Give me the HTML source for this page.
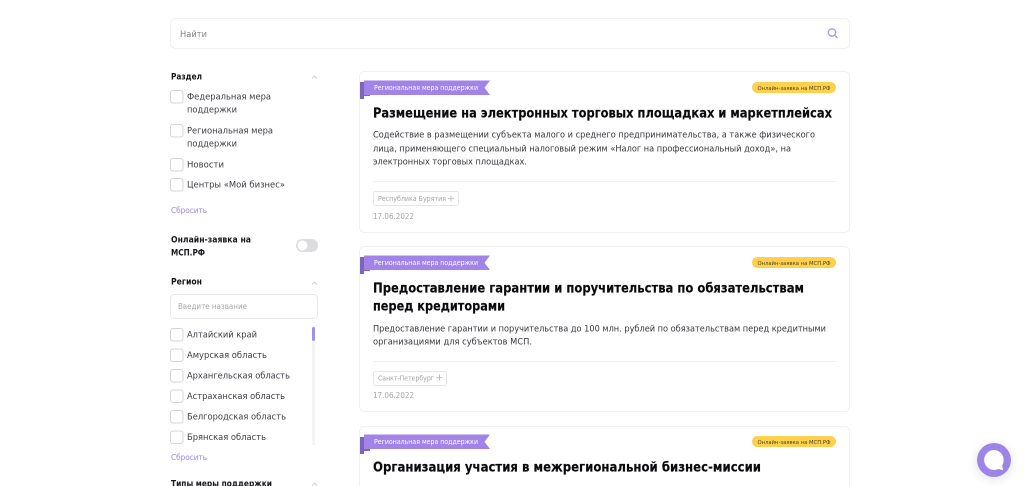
<!DOCTYPE html>
<html lang="ru"><head><meta charset="utf-8"><title>Меры поддержки</title>
<style>
html,body{margin:0;padding:0;background:#fff;width:1024px;height:486px;overflow:hidden}
svg{display:block}
text{font-family:"DejaVu Sans","Liberation Sans",sans-serif}
.t{font-size:8.8px;fill:#3c3c44;transform:translateY(-.5px)}
.h{font-size:8.8px;font-weight:700;fill:#17171c;transform:translateY(-.4px)}
.r{font-size:7.5px;fill:#9b82e2}
.rb{font-size:6.8px;fill:#fff}
.ti{font-size:13.4px;font-weight:700;fill:#0b0b0f;stroke:#0b0b0f;stroke-width:.15px;transform:translateY(-.3px)}
.d{font-size:8.8px;fill:#35353c;transform:translateY(-.4px)}
.p{font-size:5.4px;fill:#4d4320}
.g{font-size:7px;fill:#a3a3a8}
.dt{font-size:8px;fill:#a6a6aa}
.c{fill:#fff;stroke:#d4d4d8;stroke-width:1}
.cd{fill:#fff;stroke:#f0f0f2;stroke-width:1}
.ch{fill:none;stroke:#c4c4c8;stroke-width:.8}
</style></head><body>
<svg width="1024" height="486" viewBox="0 0 1024 486" xmlns="http://www.w3.org/2000/svg">
<defs>
<filter id="sh" x="-50%" y="-50%" width="200%" height="200%"><feDropShadow dx="0" dy="2" stdDeviation="5" flood-color="#000" flood-opacity=".12"/></filter>
</defs>
<rect x="170.500" y="18.500" width="679" height="30" rx="5" class="cd"/>
<text x="180" y="37" fill="#85858a" textLength="27" lengthAdjust="spacingAndGlyphs" style="font-size:9px">Найти</text>
<circle cx="832" cy="32.500" r="3.700" fill="none" stroke="#a797e8" stroke-width="1.300"/><path d="M835 35.500l2.500 2.500" stroke="#a797e8" stroke-width="1.300"/>

<!-- Sidebar -->
<text x="171" y="80" class="h" textLength="31" lengthAdjust="spacingAndGlyphs">Раздел</text>
<path d="M312 78.500l2.500-2.500 2.500 2.500" class="ch"/>
<rect x="170.500" y="90.500" width="12.500" height="12.500" rx="2.500" class="c"/>
<text x="187" y="100" class="t" textLength="84" lengthAdjust="spacingAndGlyphs">Федеральная мера</text>
<text x="187" y="113" class="t" textLength="50" lengthAdjust="spacingAndGlyphs">поддержки</text>
<rect x="170.500" y="124.500" width="12.500" height="12.500" rx="2.500" class="c"/>
<text x="187" y="134" class="t" textLength="86" lengthAdjust="spacingAndGlyphs">Региональная мера</text>
<text x="187" y="147" class="t" textLength="50" lengthAdjust="spacingAndGlyphs">поддержки</text>
<rect x="170.500" y="158.500" width="12.500" height="12.500" rx="2.500" class="c"/>
<text x="187" y="168" class="t" textLength="37" lengthAdjust="spacingAndGlyphs">Новости</text>
<rect x="170.500" y="178.500" width="12.500" height="12.500" rx="2.500" class="c"/>
<text x="187" y="188" class="t" textLength="98" lengthAdjust="spacingAndGlyphs">Центры «Мой бизнес»</text>
<text x="171" y="213" class="r" textLength="36" lengthAdjust="spacingAndGlyphs">Сбросить</text>

<text x="171" y="243" class="h" textLength="80" lengthAdjust="spacingAndGlyphs">Онлайн-заявка на</text>
<text x="171" y="256" class="h" textLength="34" lengthAdjust="spacingAndGlyphs">МСП.РФ</text>
<rect x="296" y="239" width="22" height="13" rx="6.500" fill="#dcdcde"/>
<circle cx="302.500" cy="245.500" r="5" fill="#fff"/>

<text x="171" y="285" class="h" textLength="31" lengthAdjust="spacingAndGlyphs">Регион</text>
<path d="M312 284.500l2.500-2.500 2.500 2.500" class="ch"/>
<rect x="170.500" y="294.500" width="147" height="24" rx="4" class="cd" style="stroke:#e8e8ea"/>
<text x="178" y="309" fill="#a8a8ac" textLength="69" lengthAdjust="spacingAndGlyphs" style="font-size:7.8px">Введите название</text>

<rect x="312" y="327" width="3" height="118" fill="#f3f3f4"/>
<rect x="312" y="327" width="3" height="14" rx="1.500" fill="#a58ee8"/>
<rect x="170.500" y="328.500" width="12.500" height="12.500" rx="2.500" class="c"/>
<text x="187" y="338" class="t" textLength="70" lengthAdjust="spacingAndGlyphs">Алтайский край</text>
<rect x="170.500" y="349" width="12.500" height="12.500" rx="2.500" class="c"/>
<text x="187" y="358.500" class="t" textLength="80" lengthAdjust="spacingAndGlyphs">Амурская область</text>
<rect x="170.500" y="369.500" width="12.500" height="12.500" rx="2.500" class="c"/>
<text x="187" y="379" class="t" textLength="103" lengthAdjust="spacingAndGlyphs">Архангельская область</text>
<rect x="170.500" y="390" width="12.500" height="12.500" rx="2.500" class="c"/>
<text x="187" y="399.500" class="t" textLength="98" lengthAdjust="spacingAndGlyphs">Астраханская область</text>
<rect x="170.500" y="410.500" width="12.500" height="12.500" rx="2.500" class="c"/>
<text x="187" y="420" class="t" textLength="99" lengthAdjust="spacingAndGlyphs">Белгородская область</text>
<rect x="170.500" y="431" width="12.500" height="12.500" rx="2.500" class="c"/>
<text x="187" y="440.500" class="t" textLength="79" lengthAdjust="spacingAndGlyphs">Брянская область</text>
<text x="171" y="460" class="r" textLength="36" lengthAdjust="spacingAndGlyphs">Сбросить</text>
<text x="171" y="487" class="h" textLength="101" lengthAdjust="spacingAndGlyphs">Типы меры поддержки</text>
<path d="M312 485.500l2.500-2.500 2.500 2.500" class="ch"/>

<!-- Card 1 -->
<rect x="359.500" y="71.500" width="490" height="161" rx="5" class="cd"/>
<path d="M360 82h10v14h-6v3h-4z" fill="#7a66bd"/>
<path d="M364 80.500H490l-5.500 7.200 5.500 7.300H364z" fill="#a283e8"/>
<text x="374" y="90" class="rb" textLength="104" lengthAdjust="spacingAndGlyphs">Региональная мера поддержки</text>
<rect x="752" y="82" width="84" height="11" rx="5.500" fill="#fdd14e"/>
<text x="757.500" y="89.800" class="p" textLength="73" lengthAdjust="spacingAndGlyphs">Онлайн-заявка на МСП.РФ</text>
<text x="373" y="118" class="ti" textLength="459" lengthAdjust="spacingAndGlyphs">Размещение на электронных торговых площадках и маркетплейсах</text>
<text x="373" y="138" class="d" textLength="442" lengthAdjust="spacingAndGlyphs">Содействие в размещении субъекта малого и среднего предпринимательства, а также физического</text>
<text x="373" y="152" class="d" textLength="418" lengthAdjust="spacingAndGlyphs">лица, применяющего специальный налоговый режим «Налог на профессиональный доход», на</text>
<text x="373" y="165" class="d" textLength="154" lengthAdjust="spacingAndGlyphs">электронных торговых площадках.</text>
<path d="M373 181.500H836" stroke="#f0f0f2"/>
<rect x="373.500" y="191.500" width="85" height="14" rx="2" class="cd" style="stroke:#e6e6e8"/>
<text x="378" y="201" class="g" textLength="68" lengthAdjust="spacingAndGlyphs">Республика Бурятия</text>
<path d="M451 195.500v6M448 198.500h6" stroke="#b4b4b8" stroke-width=".8"/>
<text x="373" y="219" class="dt" textLength="41" lengthAdjust="spacingAndGlyphs">17.06.2022</text>

<!-- Card 2 -->
<rect x="359.500" y="246.500" width="490" height="165" rx="5" class="cd"/>
<path d="M360 257h10v14h-6v3h-4z" fill="#7a66bd"/>
<path d="M364 255.500H490l-5.500 7.200 5.500 7.300H364z" fill="#a283e8"/>
<text x="374" y="265" class="rb" textLength="104" lengthAdjust="spacingAndGlyphs">Региональная мера поддержки</text>
<rect x="752" y="257" width="84" height="11" rx="5.500" fill="#fdd14e"/>
<text x="757.500" y="264.800" class="p" textLength="73" lengthAdjust="spacingAndGlyphs">Онлайн-заявка на МСП.РФ</text>
<text x="373" y="293" class="ti" textLength="431" lengthAdjust="spacingAndGlyphs">Предоставление гарантии и поручительства по обязательствам</text>
<text x="373" y="311" class="ti" textLength="132" lengthAdjust="spacingAndGlyphs">перед кредиторами</text>
<text x="373" y="332" class="d" textLength="453" lengthAdjust="spacingAndGlyphs">Предоставление гарантии и поручительства до 100 млн. рублей по обязательствам перед кредитными</text>
<text x="373" y="345" class="d" textLength="159" lengthAdjust="spacingAndGlyphs">организациями для субъектов МСП.</text>
<path d="M373 361.500H836" stroke="#f0f0f2"/>
<rect x="373.500" y="371.500" width="73" height="14" rx="2" class="cd" style="stroke:#e6e6e8"/>
<text x="378" y="380.500" class="g" textLength="56" lengthAdjust="spacingAndGlyphs">Санкт-Петербург</text>
<path d="M439.500 374.500v6M436.500 377.500h6" stroke="#b4b4b8" stroke-width=".8"/>
<text x="373" y="398" class="dt" textLength="41" lengthAdjust="spacingAndGlyphs">17.06.2022</text>

<!-- Card 3 -->
<rect x="359.500" y="426.500" width="490" height="80" rx="5" class="cd"/>
<path d="M360 437h10v14h-6v3h-4z" fill="#7a66bd"/>
<path d="M364 434.500H490l-5.500 7.200 5.500 7.300H364z" fill="#a283e8"/>
<text x="374" y="444" class="rb" textLength="104" lengthAdjust="spacingAndGlyphs">Региональная мера поддержки</text>
<rect x="752" y="436" width="84" height="11" rx="5.500" fill="#fdd14e"/>
<text x="757.500" y="443.800" class="p" textLength="73" lengthAdjust="spacingAndGlyphs">Онлайн-заявка на МСП.РФ</text>
<text x="373" y="472" class="ti" textLength="388" lengthAdjust="spacingAndGlyphs">Организация участия в межрегиональной бизнес-миссии</text>

<!-- Chat -->
<circle cx="994" cy="460" r="17" fill="#9d85e8" filter="url(#sh)"/>
<path d="M994 450a10 10 0 1 0 4.500 19l4.500 1.200-.8-5a10 10 0 0 0-8.200-15.200z" fill="#fff"/>
</svg>
</body></html>
